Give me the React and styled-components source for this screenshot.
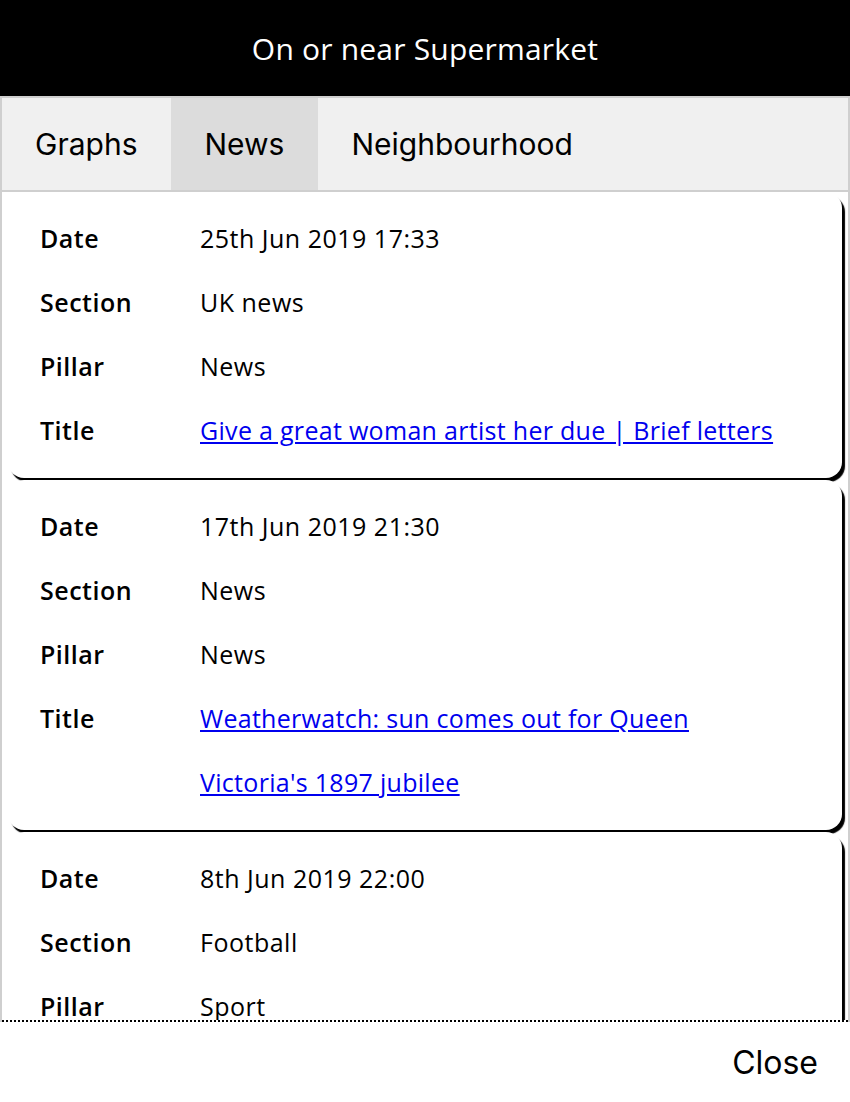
import React from 'react';
import styled, { createGlobalStyle } from 'styled-components';

const GlobalStyle = createGlobalStyle`
  html, body {
    margin: 0;
    padding: 0;
    background: #fff;
  }
  body {
    font-family: "Open Sans", "Noto Sans", sans-serif;
    color: #000;
  }
`;

const Page = styled.div`
  display: flex;
  flex-direction: column;
  height: 1102px;
  width: 850px;
  overflow: hidden;
`;

const Header = styled.div`
  height: 96px;
  flex: 0 0 96px;
  background: #000;
  color: #fff;
  display: flex;
  align-items: center;
  justify-content: center;
  font-family: "Open Sans", sans-serif;
  font-size: 30px;
  letter-spacing: 0.2px;
`;

const Panel = styled.div`
  flex: 1;
  display: flex;
  flex-direction: column;
  min-height: 0;
  border: 2px solid #cfcfcf;
  border-bottom: none;
`;

const Tabs = styled.div`
  display: flex;
  height: 92px;
  flex: 0 0 92px;
  background: #f0f0f0;
  border-bottom: 2px solid #cfcfcf;
`;

const Tab = styled.div`
  display: flex;
  align-items: center;
  padding: 0 34px 0 33px;
  font-family: Inter, sans-serif;
  font-size: 30px;
  background: ${p => (p.active ? '#dcdcdc' : 'transparent')};
`;

const Scroller = styled.div`
  flex: 1;
  min-height: 0;
  overflow: hidden;
  padding: 0 6px;
  border-bottom: 2px dotted #000;
`;

const Card = styled.div`
  background: #fff;
  border-radius: 16px;
  box-shadow: 3px 4px 1px #000;
  padding: 14px 0 16px 32px;
  margin-bottom: 2px;
`;

const Row = styled.div`
  display: grid;
  grid-template-columns: 160px 1fr;
  font-size: 25px;
  line-height: 64px;
  letter-spacing: 0.5px;
`;

const Label = styled.div`
  font-weight: 600;
`;

const Value = styled.div`
  padding-right: 45px;
`;

const Link = styled.a`
  color: #0000ee;
  text-decoration: underline;
  letter-spacing: 0.3px;
`;

const Footer = styled.div`
  height: 80px;
  flex: 0 0 80px;
  display: flex;
  align-items: center;
  justify-content: flex-end;
  padding-right: 32px;
  font-family: Inter, sans-serif;
  font-size: 32px;
`;

const articles = [
  {
    date: '25th Jun 2019 17:33',
    section: 'UK news',
    pillar: 'News',
    title: 'Give a great woman artist her due | Brief letters',
  },
  {
    date: '17th Jun 2019 21:30',
    section: 'News',
    pillar: 'News',
    title: "Weatherwatch: sun comes out for Queen Victoria's 1897 jubilee",
  },
  {
    date: '8th Jun 2019 22:00',
    section: 'Football',
    pillar: 'Sport',
    title: 'Football',
  },
];

const App = () => (
  <React.Fragment>
    <GlobalStyle />
    <Page>
      <Header>On or near Supermarket</Header>
      <Panel>
        <Tabs>
          <Tab>Graphs</Tab>
          <Tab active>News</Tab>
          <Tab>Neighbourhood</Tab>
        </Tabs>
        <Scroller>
          {articles.map(a => (
            <Card key={a.date}>
              <Row>
                <Label>Date</Label>
                <Value>{a.date}</Value>
              </Row>
              <Row>
                <Label>Section</Label>
                <Value>{a.section}</Value>
              </Row>
              <Row>
                <Label>Pillar</Label>
                <Value>{a.pillar}</Value>
              </Row>
              <Row>
                <Label>Title</Label>
                <Value>
                  <Link href="#">{a.title}</Link>
                </Value>
              </Row>
            </Card>
          ))}
        </Scroller>
      </Panel>
      <Footer>Close</Footer>
    </Page>
  </React.Fragment>
);

export default App;
